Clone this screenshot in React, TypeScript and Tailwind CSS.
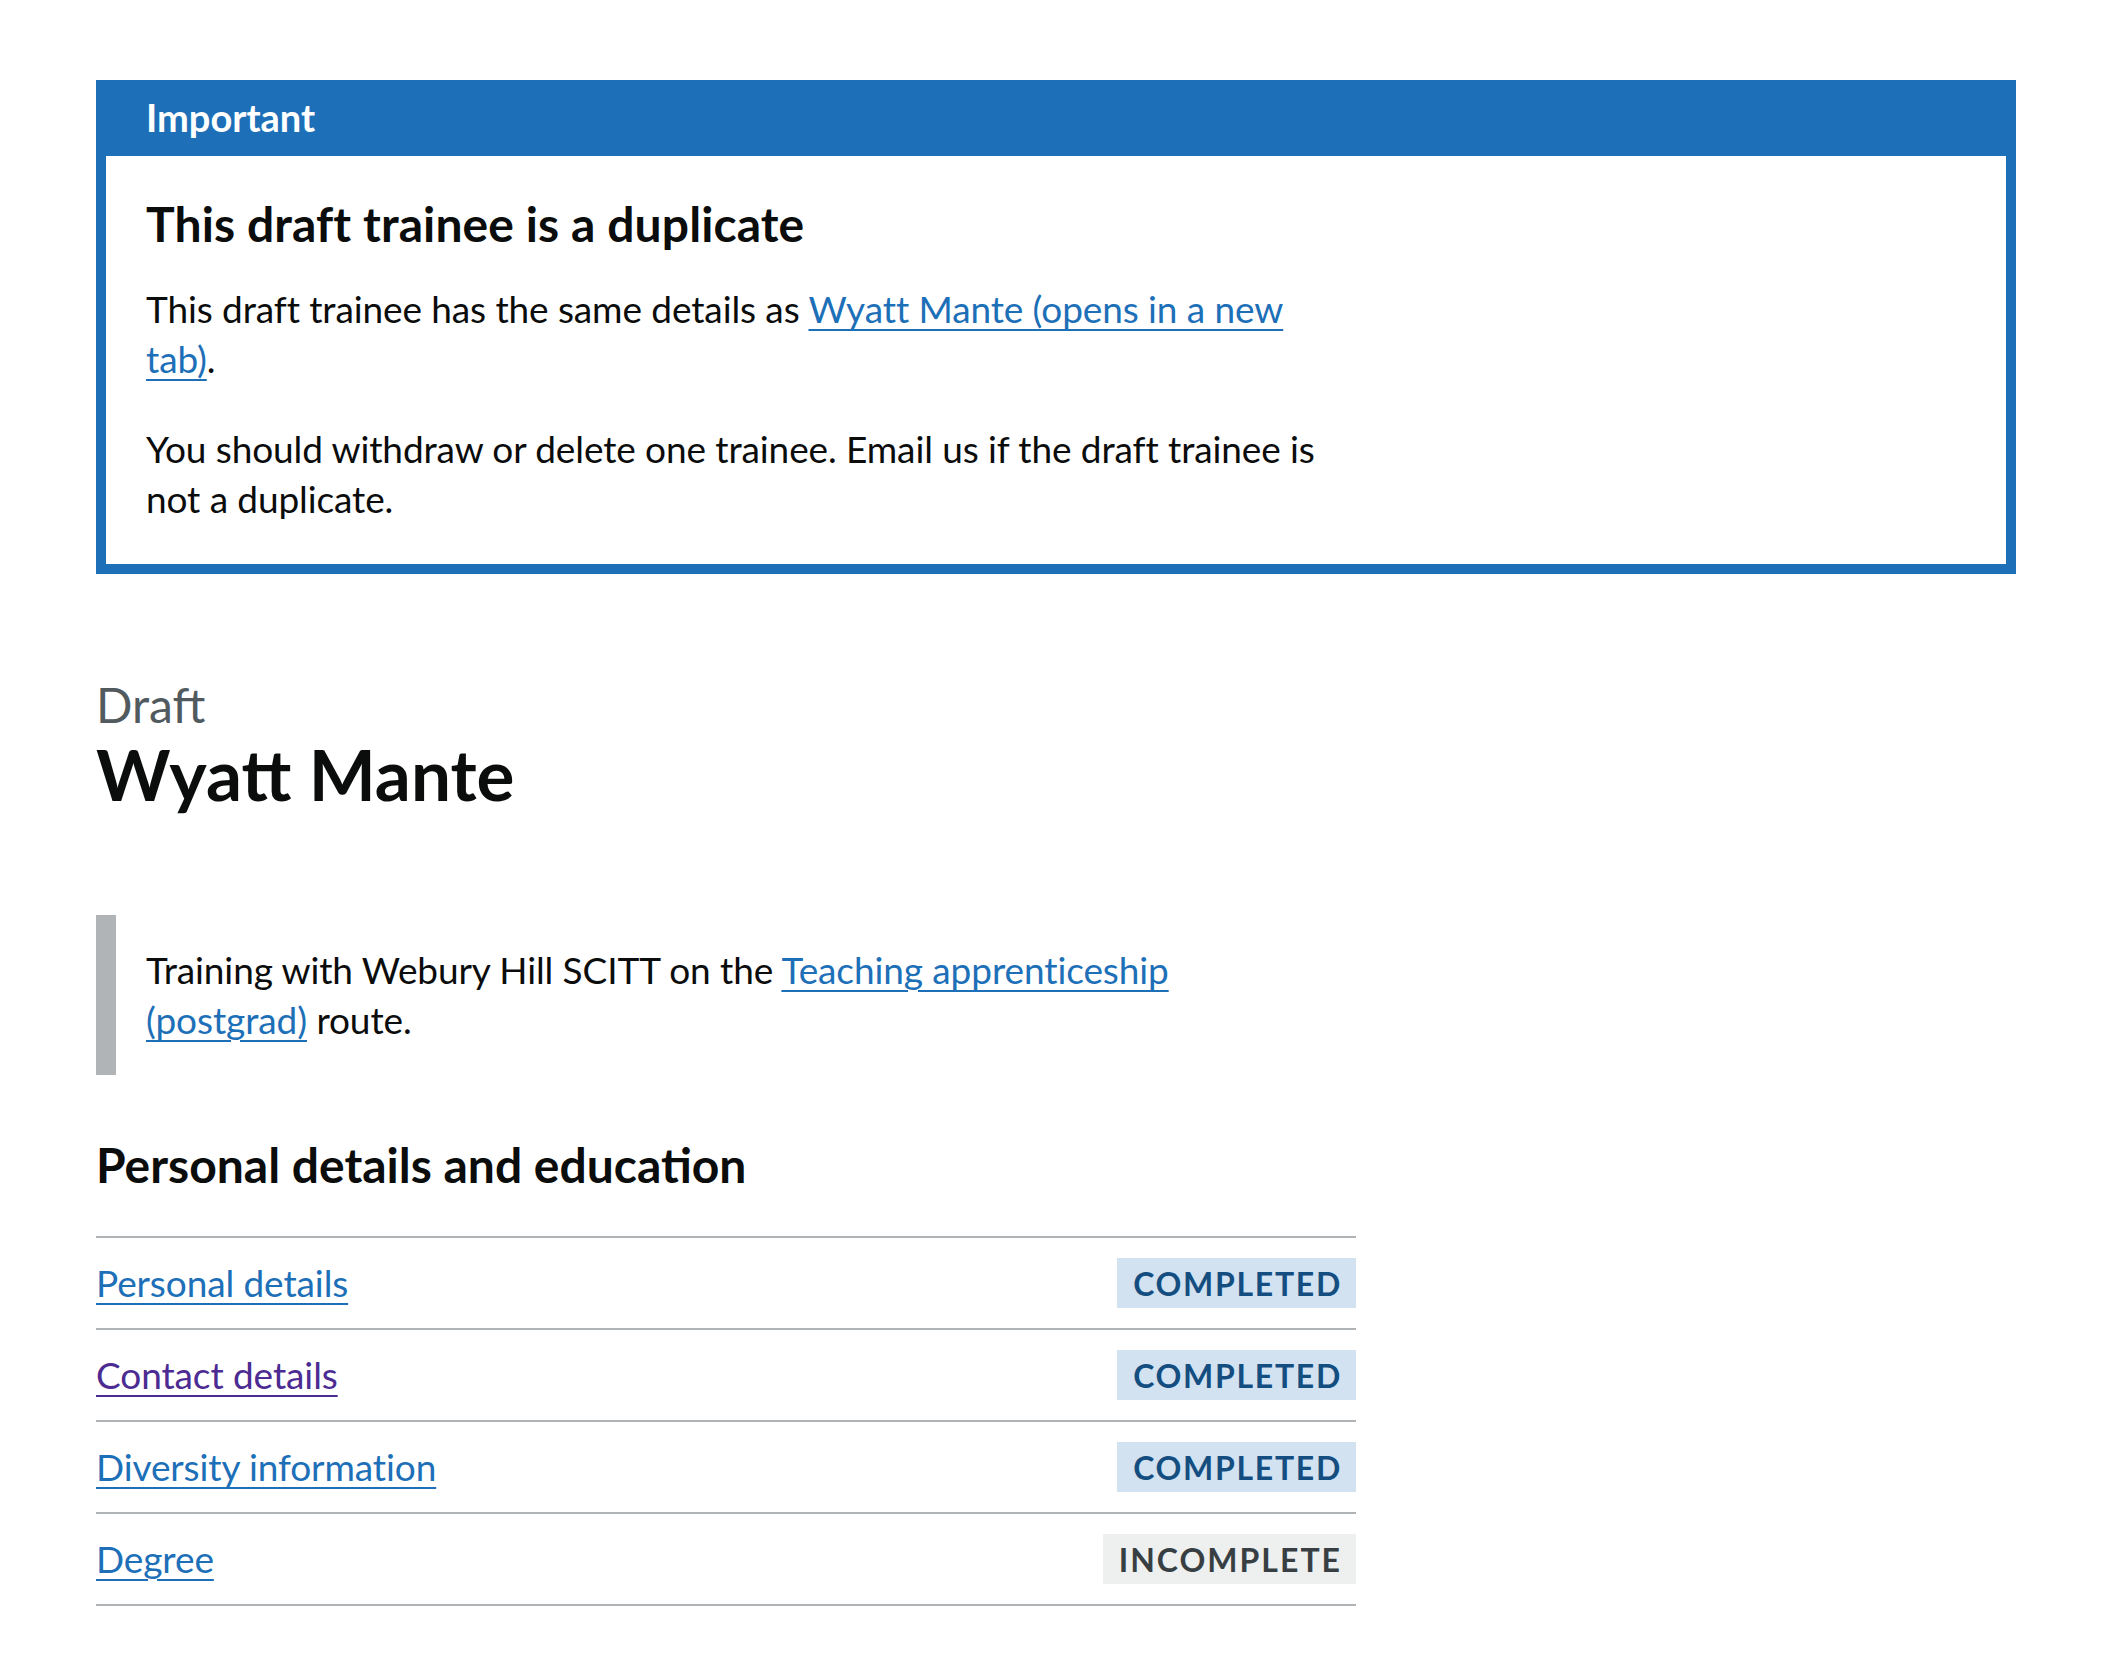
import React from "react";

interface TaskProps {
  label: string;
  status: "completed" | "incomplete";
  visited?: boolean;
}

const tasks: TaskProps[] = [
  { label: "Personal details", status: "completed" },
  { label: "Contact details", status: "completed", visited: true },
  { label: "Diversity information", status: "completed" },
  { label: "Degree", status: "incomplete" },
];

const bodyText = "text-[37px] leading-[50px] tracking-[-0.1px]";
const linkClass =
  "underline decoration-2 underline-offset-[6px] text-[#1d70b8]";

const Tag = ({ status }: { status: TaskProps["status"] }) => {
  if (status === "completed") {
    return (
      <strong className="inline-block h-[50px] pt-[10px] pb-[8px] pl-[16px] pr-[14px] bg-[#d2e2f1] text-[#144e81] text-[32px] leading-[32px] font-bold uppercase tracking-[1.7px]">
        Completed
      </strong>
    );
  }
  return (
    <strong className="inline-block h-[50px] pt-[10px] pb-[8px] pl-[16px] pr-[14px] bg-[#eeefef] text-[#383f43] text-[32px] leading-[32px] font-bold uppercase tracking-[2px]">
      Incomplete
    </strong>
  );
};

const App = () => {
  return (
    <div className="min-h-[1676px] bg-white font-['Lato',sans-serif] text-[#0b0c0c]">
      <div className="ml-[96px] w-[1920px] pt-[80px] pb-[80px]">
        {/* Notification banner */}
        <div className="border-[10px] border-[#1d70b8] bg-[#1d70b8]">
          <div className="px-[40px] pt-[2px] pb-[14px]">
            <h2 className="text-[38px] leading-[50px] font-bold text-white">
              Important
            </h2>
          </div>
          <div className="bg-white px-[40px] pt-[38px] pb-[40px]">
            <h3 className="text-[48px] leading-[60px] font-bold mb-[30px] tracking-[0.1px]">
              This draft trainee is a duplicate
            </h3>
            <p className={bodyText + " mb-[40px]"}>
              This draft trainee has the same details as{" "}
              <a href="#" className={linkClass}>
                Wyatt Mante (opens in a new
                <br />
                tab)
              </a>
              .
            </p>
            <p className={bodyText}>
              You should withdraw or delete one trainee. Email us if the draft
              trainee is
              <br />
              not a duplicate.
            </p>
          </div>
        </div>

        <div className="w-[1260px]">
          <span className="block mt-[101px] text-[48px] leading-[60px] text-[#505a5f]">
            Draft
          </span>
          <h1 className="-mt-[1px] text-[71px] leading-[80px] font-bold">
            Wyatt Mante
          </h1>

          {/* Inset text */}
          <div className="mt-[101px] border-l-[20px] border-[#b1b4b6] pl-[30px] py-[30px]">
            <p className={bodyText}>
              Training with Webury Hill SCITT on the{" "}
              <a href="#" className={linkClass}>
                Teaching apprenticeship
                <br />
                (postgrad)
              </a>{" "}
              route.
            </p>
          </div>

          <h2 className="mt-[60px] text-[48px] leading-[60px] font-bold">
            Personal details and education
          </h2>

          <ul className="mt-[41px] border-t-2 border-[#b1b4b6]">
            {tasks.map((task) => (
              <li
                key={task.label}
                className="flex justify-between items-start py-[20px] border-b-2 border-[#b1b4b6]"
              >
                <a
                  href="#"
                  className={
                    task.visited
                      ? bodyText +
                        " underline decoration-2 underline-offset-[6px] text-[#4c2c92]"
                      : bodyText + " " + linkClass
                  }
                >
                  {task.label}
                </a>
                <Tag status={task.status} />
              </li>
            ))}
          </ul>
        </div>
      </div>
    </div>
  );
};

export default App;
